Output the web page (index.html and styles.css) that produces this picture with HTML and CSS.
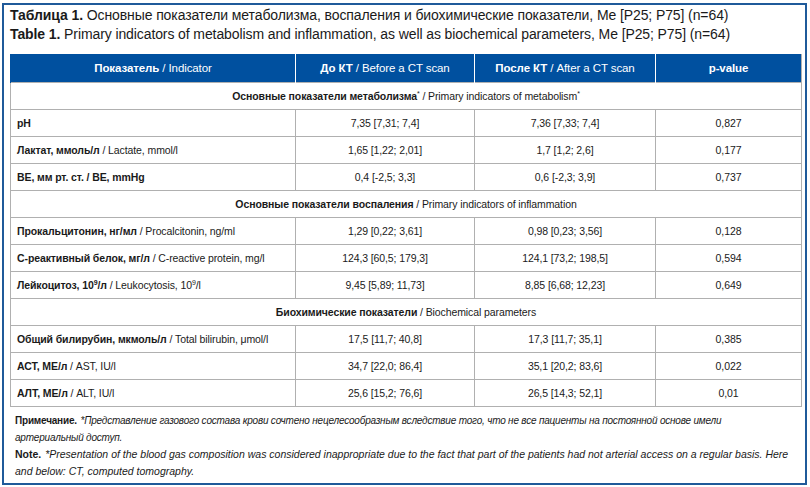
FILE: index.html
```html
<!DOCTYPE html>
<html lang="ru">
<head>
    <meta charset="UTF-8">
    <title>Таблица 1</title>
    <link rel="stylesheet" href="styles.css">
</head>
<body>
    <div class="frame">
        <div class="caption">
            <p><b>Таблица 1.</b> Основные показатели метаболизма, воспаления и биохимические показатели, Me [P25; P75] (n=64)</p>
            <p><b>Table 1.</b> Primary indicators of metabolism and inflammation, as well as biochemical parameters, Me [P25; P75] (n=64)</p>
        </div>

        <table class="data-table">
            <colgroup>
                <col class="c1"><col class="c2"><col class="c3"><col class="c4">
            </colgroup>
            <tr>
                <th><b>Показатель</b> / Indicator</th>
                <th><b>До КТ</b> / Before a CT scan</th>
                <th><b>После КТ</b> / After a CT scan</th>
                <th><b>p-value</b></th>
            </tr>
            <tr class="section">
                <td colspan="4"><b>Основные показатели метаболизма</b><sup>*</sup> / Primary indicators of metabolism<sup>*</sup></td>
            </tr>
            <tr>
                <td><b>pH</b></td>
                <td>7,35 [7,31; 7,4]</td>
                <td>7,36 [7,33; 7,4]</td>
                <td>0,827</td>
            </tr>
            <tr>
                <td><b>Лактат, ммоль/л</b> / Lactate, mmol/l</td>
                <td>1,65 [1,22; 2,01]</td>
                <td>1,7 [1,2; 2,6]</td>
                <td>0,177</td>
            </tr>
            <tr>
                <td><b>BE, мм рт. ст. / BE, mmHg</b></td>
                <td>0,4 [-2,5; 3,3]</td>
                <td>0,6 [-2,3; 3,9]</td>
                <td>0,737</td>
            </tr>
            <tr class="section">
                <td colspan="4"><b>Основные показатели воспаления</b> / Primary indicators of inflammation</td>
            </tr>
            <tr>
                <td><b>Прокальцитонин, нг/мл</b> / Procalcitonin, ng/ml</td>
                <td>1,29 [0,22; 3,61]</td>
                <td>0,98 [0,23; 3,56]</td>
                <td>0,128</td>
            </tr>
            <tr>
                <td><b>С-реактивный белок, мг/л</b> / C-reactive protein, mg/l</td>
                <td>124,3 [60,5; 179,3]</td>
                <td>124,1 [73,2; 198,5]</td>
                <td>0,594</td>
            </tr>
            <tr>
                <td><b>Лейкоцитоз, 10<sup>9</sup>/л</b> / Leukocytosis, 10<sup>9</sup>/l</td>
                <td>9,45 [5,89; 11,73]</td>
                <td>8,85 [6,68; 12,23]</td>
                <td>0,649</td>
            </tr>
            <tr class="section">
                <td colspan="4"><b>Биохимические показатели</b> / Biochemical parameters</td>
            </tr>
            <tr>
                <td><b>Общий билирубин, мкмоль/л</b> / Total bilirubin, μmol/l</td>
                <td>17,5 [11,7; 40,8]</td>
                <td>17,3 [11,7; 35,1]</td>
                <td>0,385</td>
            </tr>
            <tr>
                <td><b>АСТ, МЕ/л</b> / AST, IU/l</td>
                <td>34,7 [22,0; 86,4]</td>
                <td>35,1 [20,2; 83,6]</td>
                <td>0,022</td>
            </tr>
            <tr>
                <td><b>АЛТ, МЕ/л</b> / ALT, IU/l</td>
                <td>25,6 [15,2; 76,6]</td>
                <td>26,5 [14,3; 52,1]</td>
                <td>0,01</td>
            </tr>
        </table>

        <div class="notes">
            <p class="note-ru"><b>Примечание.</b> <i>*Представление газового состава крови сочтено нецелесообразным вследствие того, что не все пациенты на постоянной основе имели<br>артериальный доступ.</i></p>
            <p class="note-en"><b>Note.</b> <i>*Presentation of the blood gas composition was considered inappropriate due to the fact that part of the patients had not arterial access on a regular basis. Here and below: CT, computed tomography.</i></p>
        </div>
    </div>
</body>
</html>
```

FILE: styles.css
```css
html, body {
    margin: 0;
    padding: 0;
    background: #ffffff;
}
body {
    padding: 3px 3px 2px 2px;
    font-family: 'Liberation Sans', Arial, sans-serif;
    color: #1a1a1a;
}
.frame {
    border: 2px solid #1f5a9a;
    height: 482px;
    box-sizing: border-box;
    padding: 0 6px 0 6px;
}
.caption {
    padding-top: 1px;
}
.caption p {
    margin: 0;
    font-size: 14px;
    line-height: 19px;
    letter-spacing: -0.1px;
}
.data-table {
    margin-top: 10px;
    width: 791px;
    border-collapse: collapse;
    table-layout: fixed;
    font-size: 10.5px;
    letter-spacing: -0.1px;
}
.c1 { width: 285px; }
.c2 { width: 179px; }
.c3 { width: 181px; }
.c4 { width: 146px; }
.data-table th {
    background: #00509f;
    color: #ffffff;
    font-weight: normal;
    font-size: 11.5px;
    height: 28px;
    padding: 0 6px;
    border-left: 1px solid #ffffff;
    border-right: 1px solid #ffffff;
    text-align: center;
}
.data-table th:first-child { border-left: 1px solid #00509f; }
.data-table th:last-child { border-right: 1px solid #b0b0b0; }
.data-table td {
    border: 1px solid #b0b0b0;
    height: 26px;
    padding: 0 6px;
    text-align: center;
}
.data-table td:first-child {
    text-align: left;
}
.data-table .section td {
    text-align: center;
}
.data-table sup {
    font-size: 7px;
    line-height: 0;
}
.notes {
    padding: 5px 0 0 5px;
    font-size: 10.5px;
    line-height: 17px;
}
.notes p {
    margin: 0;
}
.notes b {
    margin-right: 1px;
}
.notes .note-ru {
    font-size: 10px;
    letter-spacing: -0.2px;
}
```
